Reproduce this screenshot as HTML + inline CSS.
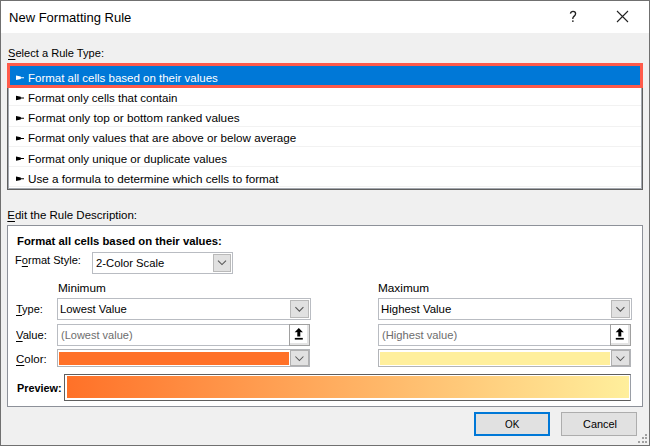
<!DOCTYPE html>
<html><head><meta charset="utf-8"><style>
*{margin:0;padding:0;box-sizing:border-box}
html,body{width:650px;height:446px;overflow:hidden;background:#f0f0f0;font-family:"Liberation Sans",sans-serif}
.a{position:absolute}
.t{position:absolute;transform-origin:0 0;white-space:pre;line-height:normal;font-family:"Liberation Sans",sans-serif}
.t u{text-decoration:underline;text-underline-offset:1.8px}
svg.ov{position:absolute;left:0;top:0}
</style></head>
<body>
<div class="a" style="left:0px;top:0px;width:650px;height:446px;border:1px solid #707070;background:#f0f0f0"></div>
<div class="a" style="left:1px;top:1px;width:648px;height:32px;background:#fff"></div>
<div class="a" style="left:7px;top:63px;width:636px;height:127px;border:1px solid #5f5f5f;box-shadow:inset 0 0 0 1px #a3a7ae;background:#fff"></div>
<div class="a" style="left:9px;top:105px;width:632px;height:1px;background:#f2f2f2"></div>
<div class="a" style="left:9px;top:126px;width:632px;height:1px;background:#f2f2f2"></div>
<div class="a" style="left:9px;top:146px;width:632px;height:1px;background:#f2f2f2"></div>
<div class="a" style="left:9px;top:166px;width:632px;height:1px;background:#f2f2f2"></div>
<div class="a" style="left:9px;top:186px;width:632px;height:1px;background:#f2f2f2"></div>
<div class="a" style="left:7px;top:63px;width:636px;height:25px;border:3px solid #ff5a4a;background:#0078d7"></div>
<div class="a" style="left:7px;top:225px;width:636px;height:182px;border:1px solid #8d9199;background:#fff"></div>
<div class="a" style="left:92px;top:252px;width:141px;height:22px;border:1px solid #b9bcc2;background:#fff"></div>
<div class="a" style="left:213px;top:254px;width:18px;height:18px;border:1px solid #b9b9b9;background:#e1e1e1"></div>
<div class="a" style="left:57px;top:298px;width:254px;height:22px;border:1px solid #b9bcc2;background:#fff"></div>
<div class="a" style="left:290px;top:300px;width:19px;height:18px;border:1px solid #b9b9b9;background:#e1e1e1"></div>
<div class="a" style="left:57px;top:324px;width:253px;height:22px;border:1px solid #b9bcc2;background:#fff"></div>
<div class="a" style="left:289px;top:324px;width:21px;height:22px;border:1px solid #a0a0a0;background:#fff;box-shadow:inset -2px -2px 0 #e3e3e3"></div>
<div class="a" style="left:57px;top:349px;width:253px;height:18px;border:1px solid #b2b4b8;background:#fff"></div>
<div class="a" style="left:59px;top:352px;width:230px;height:13px;background:#ff7128"></div>
<div class="a" style="left:290px;top:350px;width:19px;height:16px;border:1px solid #b0b0b0;background:#e1e1e1"></div>
<div class="a" style="left:378px;top:298px;width:254px;height:22px;border:1px solid #b9bcc2;background:#fff"></div>
<div class="a" style="left:611px;top:300px;width:19px;height:18px;border:1px solid #b9b9b9;background:#e1e1e1"></div>
<div class="a" style="left:378px;top:324px;width:253px;height:22px;border:1px solid #b9bcc2;background:#fff"></div>
<div class="a" style="left:610px;top:324px;width:21px;height:22px;border:1px solid #a0a0a0;background:#fff;box-shadow:inset -2px -2px 0 #e3e3e3"></div>
<div class="a" style="left:378px;top:349px;width:253px;height:18px;border:1px solid #b2b4b8;background:#fff"></div>
<div class="a" style="left:380px;top:352px;width:230px;height:13px;background:#ffef9c"></div>
<div class="a" style="left:611px;top:350px;width:19px;height:16px;border:1px solid #b0b0b0;background:#e1e1e1"></div>
<div class="a" style="left:64px;top:374px;width:567px;height:27px;border:1px solid #5e5e5e;border-right-color:#9a9ea6;background:#fff"></div>
<div class="a" style="left:67px;top:376px;width:562px;height:22px;background:linear-gradient(to right,#ff7128,#ffef9c)"></div>
<div class="a" style="left:474px;top:412px;width:76px;height:24px;border:2px solid #0078d7;background:#e1e1e1"></div>
<div class="a" style="left:561px;top:412px;width:76px;height:24px;border:1px solid #adadad;background:#e1e1e1"></div>
<div class="a" style="left:645px;top:434px;width:2px;height:2px;background:#a0a0a0"></div>
<div class="a" style="left:642px;top:437px;width:2px;height:2px;background:#a0a0a0"></div>
<div class="a" style="left:645px;top:437px;width:2px;height:2px;background:#a0a0a0"></div>
<div class="a" style="left:638px;top:441px;width:2px;height:2px;background:#a0a0a0"></div>
<div class="a" style="left:642px;top:441px;width:2px;height:2px;background:#a0a0a0"></div>
<div class="a" style="left:645px;top:441px;width:2px;height:2px;background:#a0a0a0"></div>
<svg class="ov" width="650" height="446" viewBox="0 0 650 446">
<path d="M570.4 13.6 C570.8 11.8 572 11.3 573 11.3 C574.6 11.3 575.6 12.3 575.6 13.8 C575.6 15.4 574.2 16.1 573.4 16.9 C572.9 17.4 572.8 17.9 572.8 18.9" fill="none" stroke="#222" stroke-width="1.35"/><rect x="572.1" y="20.4" width="1.5" height="1.5" fill="#222"/>
<path d="M617 11 L628 22 M628 11 L617 22" stroke="#222" stroke-width="1.1"/>
<path d="M16.0 75.60 L20.8 76.60 L20.8 77.30 L24 77.30 L24 78.30 L20.8 78.30 L20.8 79.00 L16.0 80.00 Z" fill="#fff"/>
<path d="M16.0 95.80 L20.8 96.80 L20.8 97.50 L24 97.50 L24 98.50 L20.8 98.50 L20.8 99.20 L16.0 100.20 Z" fill="#000"/>
<path d="M16.0 116.00 L20.8 117.00 L20.8 117.70 L24 117.70 L24 118.70 L20.8 118.70 L20.8 119.40 L16.0 120.40 Z" fill="#000"/>
<path d="M16.0 136.20 L20.8 137.20 L20.8 137.90 L24 137.90 L24 138.90 L20.8 138.90 L20.8 139.60 L16.0 140.60 Z" fill="#000"/>
<path d="M16.0 156.40 L20.8 157.40 L20.8 158.10 L24 158.10 L24 159.10 L20.8 159.10 L20.8 159.80 L16.0 160.80 Z" fill="#000"/>
<path d="M16.0 176.60 L20.8 177.60 L20.8 178.30 L24 178.30 L24 179.30 L20.8 179.30 L20.8 180.00 L16.0 181.00 Z" fill="#000"/>
<path d="M218.0 260.6 L222 264.6 L226.0 260.6" fill="none" stroke="#555" stroke-width="1.05"/>
<path d="M295.4 307.2 L299.4 311.2 L303.4 307.2" fill="none" stroke="#555" stroke-width="1.05"/>
<path d="M298.8 328.1 L302.9 332.3 Q301.6 332.4 300.3 332.0 L300.3 336.6 L297.3 336.6 L297.3 332.0 Q296.0 332.4 294.7 332.3 Z" fill="#000"/>
<rect x="294.8" y="337.9" width="8" height="1.7" fill="#000"/>
<path d="M295.4 356.5 L299.4 360.5 L303.4 356.5" fill="none" stroke="#555" stroke-width="1.05"/>
<path d="M616.4 307.2 L620.4 311.2 L624.4 307.2" fill="none" stroke="#555" stroke-width="1.05"/>
<path d="M619.8 328.1 L623.9 332.3 Q622.6 332.4 621.3 332.0 L621.3 336.6 L618.3 336.6 L618.3 332.0 Q617.0 332.4 615.7 332.3 Z" fill="#000"/>
<rect x="615.8" y="337.9" width="8" height="1.7" fill="#000"/>
<path d="M616.4 356.5 L620.4 360.5 L624.4 356.5" fill="none" stroke="#555" stroke-width="1.05"/>
</svg>
<div class="t" style="left:9.24px;top:9.78px;font-size:13.5px;transform:scaleX(0.9643);color:#000">New Formatting Rule</div>
<div class="t" style="left:8.20px;top:46.59px;font-size:11.5px;transform:scaleX(0.9646);color:#000"><u>S</u>elect a Rule Type:</div>
<div class="t" style="left:28.00px;top:71.59px;font-size:11.5px;transform:scaleX(1.0000);color:#fff">Format all cells based on their values</div>
<div class="t" style="left:28.00px;top:91.59px;font-size:11.5px;transform:scaleX(0.9986);color:#000">Format only cells that contain</div>
<div class="t" style="left:27.98px;top:111.59px;font-size:11.5px;transform:scaleX(1.0249);color:#000">Format only top or bottom ranked values</div>
<div class="t" style="left:27.99px;top:131.59px;font-size:11.5px;transform:scaleX(1.0110);color:#000">Format only values that are above or below average</div>
<div class="t" style="left:27.99px;top:152.59px;font-size:11.5px;transform:scaleX(1.0071);color:#000">Format only unique or duplicate values</div>
<div class="t" style="left:27.98px;top:172.59px;font-size:11.5px;transform:scaleX(1.0184);color:#000">Use a formula to determine which cells to format</div>
<div class="t" style="left:7.30px;top:208.59px;font-size:11.5px;transform:scaleX(1.0000);color:#000"><u>E</u>dit the Rule Description:</div>
<div class="t" style="left:16.80px;top:234.59px;font-size:11.5px;font-weight:bold;transform:scaleX(0.9832);color:#000">Format all cells based on their values:</div>
<div class="t" style="left:15.24px;top:253.59px;font-size:11.5px;transform:scaleX(0.9642);color:#000">F<u>o</u>rmat Style:</div>
<div class="t" style="left:95.70px;top:256.59px;font-size:11.5px;transform:scaleX(0.9786);color:#000">2-Color Scale</div>
<div class="t" style="left:58.18px;top:281.59px;font-size:11.5px;transform:scaleX(1.0244);color:#000">Minimum</div>
<div class="t" style="left:378.38px;top:281.59px;font-size:11.5px;transform:scaleX(1.0250);color:#000">Maximum</div>
<div class="t" style="left:16.20px;top:302.59px;font-size:11.5px;transform:scaleX(0.9571);color:#000"><u>T</u>ype:</div>
<div class="t" style="left:60.42px;top:302.59px;font-size:11.5px;transform:scaleX(0.9791);color:#000">Lowest Value</div>
<div class="t" style="left:380.91px;top:302.59px;font-size:11.5px;transform:scaleX(0.9929);color:#000">Highest Value</div>
<div class="t" style="left:16.20px;top:328.59px;font-size:11.5px;transform:scaleX(0.9710);color:#000"><u>V</u>alue:</div>
<div class="t" style="left:61.00px;top:328.59px;font-size:11.5px;transform:scaleX(0.9568);color:#6d6d6d">(Lowest value)</div>
<div class="t" style="left:381.90px;top:328.59px;font-size:11.5px;transform:scaleX(0.9727);color:#6d6d6d">(Highest value)</div>
<div class="t" style="left:16.20px;top:352.59px;font-size:11.5px;transform:scaleX(1.0033);color:#000"><u>C</u>olor:</div>
<div class="t" style="left:16.80px;top:381.59px;font-size:11.5px;font-weight:bold;transform:scaleX(0.9447);color:#000">Preview:</div>
<div class="t" style="left:504.80px;top:417.59px;font-size:11.5px;transform:scaleX(0.8588);color:#000">OK</div>
<div class="t" style="left:582.60px;top:417.59px;font-size:11.5px;transform:scaleX(0.9486);color:#000">Cancel</div>
</body></html>
